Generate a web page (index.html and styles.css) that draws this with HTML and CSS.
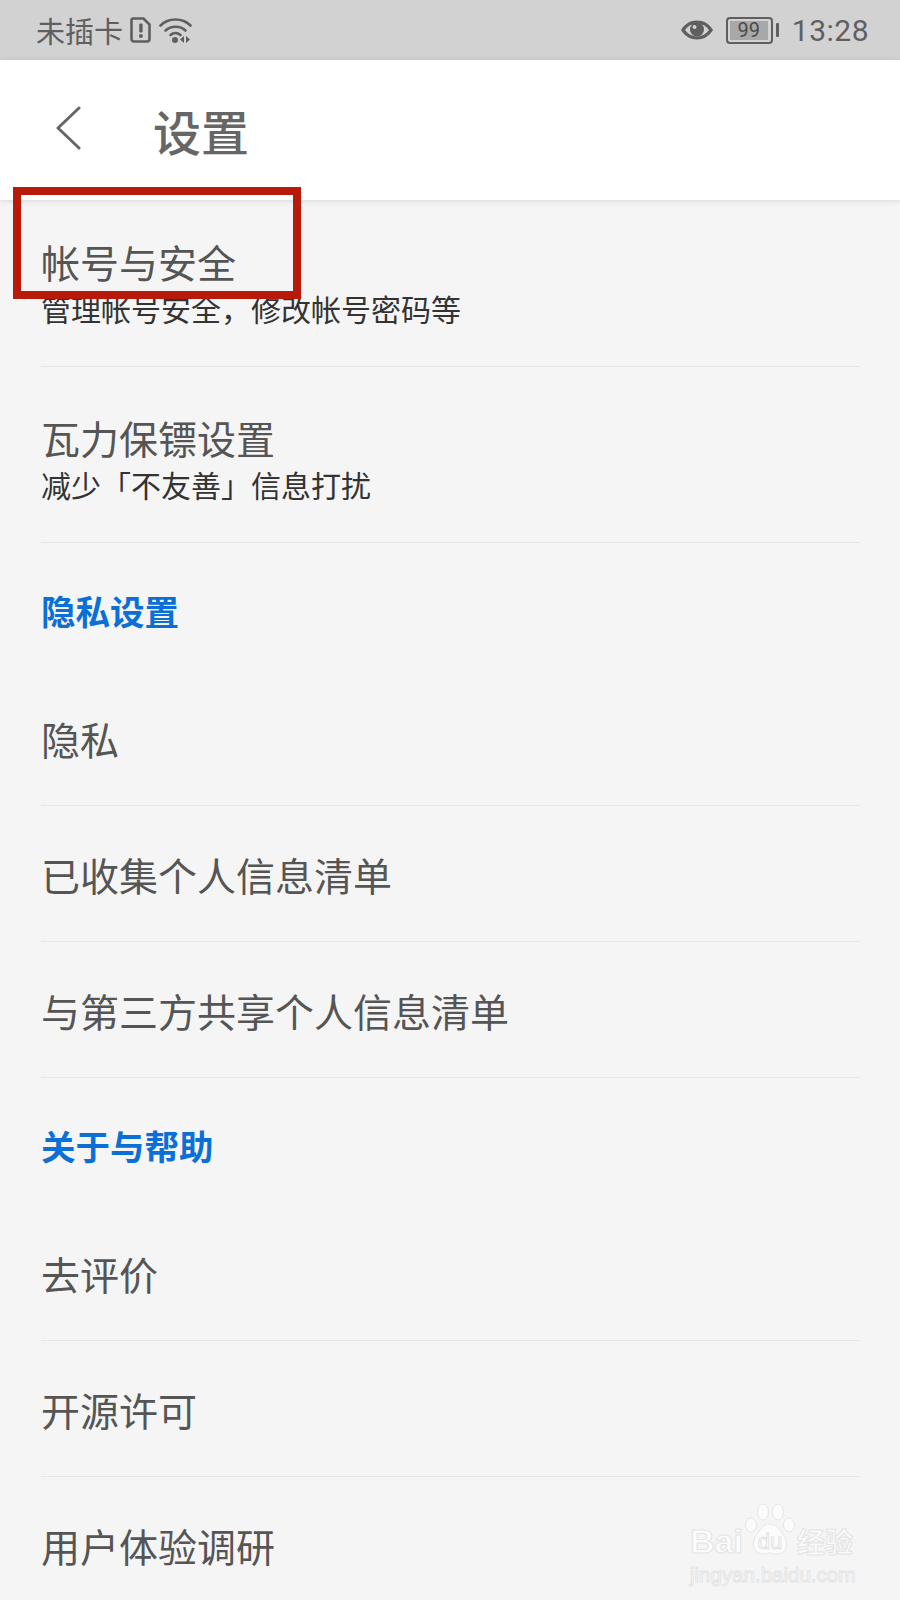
FILE: index.html
```html
<!DOCTYPE html>
<html lang="zh-CN">
<head>
  <meta charset="UTF-8">
  <meta name="viewport" content="width=device-width, initial-scale=1.0">
  <title>设置</title>
  <link rel="stylesheet" href="styles.css">
</head>
<body>
  <div class="page">
    <div class="status-bar">
      <div class="status-left">
        <span class="carrier">未插卡</span>
        <svg class="sim-icon" width="22" height="28" viewBox="0 0 22 28">
          <path d="M3 2.5h10.5l6 6V23a2.5 2.5 0 0 1-2.5 2.5H4A2.5 2.5 0 0 1 1.500 23V4A1.500 1.500 0 0 1 3 2.500z" fill="none" stroke="#5f5f5f" stroke-width="2.600"/>
          <rect x="9.200" y="7.500" width="3.400" height="9" rx="1" fill="#5f5f5f"/>
          <circle cx="10.900" cy="20" r="2" fill="#5f5f5f"/>
        </svg>
        <svg class="wifi-icon" width="34" height="28" viewBox="0 0 34 28">
          <path d="M1.500 9.500C9.500 1.500 23.500 1.500 31.500 9.500" fill="none" stroke="#5f5f5f" stroke-width="2.600" stroke-linecap="round"/>
          <path d="M6.500 14.500C12 9.500 21 9.500 26.500 14.500" fill="none" stroke="#5f5f5f" stroke-width="2.600" stroke-linecap="round"/>
          <path d="M11.500 19C14.500 16.500 18.500 16.500 21.500 19" fill="none" stroke="#5f5f5f" stroke-width="2.600" stroke-linecap="round"/>
          <circle cx="16" cy="24" r="3" fill="#5f5f5f"/>
          <path d="M25 20v7l-4-3.500zM27 20v7l4-3.500z" fill="#5f5f5f"/>
        </svg>
      </div>
      <div class="status-right">
        <svg class="eye-icon" width="34" height="22" viewBox="0 0 34 22">
          <path d="M1 11C5 4.500 10.500 1.500 17 1.500S29 4.500 33 11c-4 6.500-9.500 9.500-16 9.500S5 17.500 1 11z" fill="#5f5f5f"/>
          <path d="M5 11c3-4.200 7-6.500 12-6.500S26 6.800 29 11c-3 4.200-7 6.500-12 6.500S8 15.200 5 11z" fill="#d2d2d2"/>
          <circle cx="17" cy="10.500" r="7" fill="#5f5f5f"/>
          <circle cx="14.500" cy="8" r="2" fill="#d2d2d2"/>
        </svg>
        <div class="battery">
          <div class="battery-body"><span class="battery-level">99</span></div>
          <div class="battery-tip"></div>
        </div>
        <span class="clock">13:28</span>
      </div>
    </div>

    <header class="top-bar">
      <svg class="back-icon" width="26" height="44" viewBox="0 0 26 44">
        <path d="M24 2L3 22l21 20" fill="none" stroke="#666" stroke-width="3" stroke-linecap="round" stroke-linejoin="round"/>
      </svg>
      <h1 class="page-title">设置</h1>
    </header>

    <div class="settings">
      <div class="row row-two row-first">
        <div class="row-title">帐号与安全</div>
        <div class="row-sub">管理帐号安全，修改帐号密码等</div>
      </div>
      <div class="row row-two">
        <div class="row-title">瓦力保镖设置</div>
        <div class="row-sub">减少「不友善」信息打扰</div>
      </div>
      <div class="section-title">隐私设置</div>
      <div class="row"><div class="row-title">隐私</div></div>
      <div class="row"><div class="row-title">已收集个人信息清单</div></div>
      <div class="row"><div class="row-title">与第三方共享个人信息清单</div></div>
      <div class="section-title">关于与帮助</div>
      <div class="row"><div class="row-title">去评价</div></div>
      <div class="row"><div class="row-title">开源许可</div></div>
      <div class="row row-last"><div class="row-title">用户体验调研</div></div>
    </div>

    <div class="red-box"></div>

    <div class="watermark">
      <div class="wm-top">
        <span class="wm-brand">Bai</span>
        <div class="wm-paw">
          <svg width="50" height="56" viewBox="0 0 50 56">
            <g fill="#fbfbfb" stroke="#e6e6e6" stroke-width="1">
              <ellipse cx="6" cy="22" rx="5.500" ry="7"/>
              <ellipse cx="18" cy="9" rx="5.500" ry="8"/>
              <ellipse cx="33" cy="9" rx="5.500" ry="8"/>
              <ellipse cx="44" cy="22" rx="5.500" ry="7"/>
              <path d="M25 21c7 0 10 6 14 12 5 7 3 18-7 18-3 0-5-1-7-1s-4 1-7 1c-10 0-12-11-7-18 4-6 7-12 14-12z"/>
            </g>
          </svg>
          <span class="wm-du">du</span>
        </div>
        <span class="wm-cn">经验</span>
      </div>
      <div class="wm-url">jingyan.baidu.com</div>
    </div>
  </div>
</body>
</html>
```

FILE: styles.css
```css
* {
  box-sizing: border-box;
}
body {
  margin: 0;
  background: #f5f5f5;
  font-family: "Noto Sans CJK SC", "Noto Sans", sans-serif;
}
.page {
  position: relative;
  width: 900px;
  height: 1600px;
  overflow: hidden;
  background: #f5f5f5;
}

/* status bar */
.status-bar {
  height: 60px;
  background: #d2d2d2;
  display: flex;
  justify-content: space-between;
  align-items: center;
  padding: 0 31px 0 36px;
  color: #5f5f5f;
}
.status-left, .status-right {
  display: flex;
  align-items: center;
}
.carrier {
  font-size: 29px;
  line-height: 60px;
}
.sim-icon {
  margin-left: 7px;
}
.wifi-icon {
  margin-left: 7px;
}
.battery {
  display: flex;
  align-items: center;
  margin-left: 12px;
}
.battery-body {
  width: 47px;
  height: 27px;
  border: 2px solid #5f5f5f;
  border-radius: 4px;
  padding: 2px;
}
.battery-level {
  display: block;
  height: 19px;
  width: 38px;
  background: #a8a8a8;
  font-family: "Roboto", sans-serif;
  font-size: 20px;
  line-height: 19px;
  text-align: center;
  color: #4c4c4c;
}
.battery-tip {
  width: 3px;
  height: 14px;
  background: #5f5f5f;
  margin-left: 3px;
  border-radius: 1px;
}
.clock {
  margin-left: 13px;
  font-family: "Roboto", sans-serif;
  font-size: 30px;
  letter-spacing: 0.5px;
}

/* header */
.top-bar {
  height: 140px;
  background: #fff;
  display: flex;
  align-items: center;
  padding-left: 55px;
  box-shadow: 0 1px 6px rgba(0, 0, 0, 0.12);
  position: relative;
}
.back-icon {
  margin-top: -4px;
}
.page-title {
  margin: 0 0 0 72px;
  font-size: 48px;
  font-weight: 500;
  color: #666;
  line-height: 60px;
}

/* list */
.settings {
  padding: 0 40px 0 41px;
}
.row {
  height: 136px;
  border-bottom: 1px solid #e6e6e6;
  display: flex;
  flex-direction: column;
  justify-content: center;
}
.row-two {
  height: 176px;
  justify-content: flex-start;
  padding-top: 46px;
}
.row-first {
  height: 167px;
  padding-top: 37px;
}
.row-last {
  border-bottom: none;
}
.row-title {
  font-size: 39px;
  line-height: 48px;
  color: #555;
}
.row-sub {
  font-size: 30px;
  line-height: 46px;
  color: #333;
}
.section-title {
  height: 127px;
  padding-top: 43px;
  font-size: 34.500px;
  line-height: 48px;
  font-weight: 700;
  color: #0b70d5;
}

/* annotation over the screenshot */
.red-box {
  position: absolute;
  left: 13px;
  top: 187px;
  width: 288px;
  height: 112px;
  border: 8px solid #b81a0a;
}

/* watermark */
.watermark {
  position: absolute;
  left: 690px;
  top: 1503px;
  width: 170px;
  color: #fbfbfb;
  -webkit-text-stroke: 1px #e4e4e4;
}
.wm-top {
  display: flex;
  align-items: flex-end;
  height: 56px;
}
.wm-brand {
  font-family: "Liberation Sans", sans-serif;
  font-weight: 700;
  font-size: 34px;
  line-height: 34px;
  width: 55px;
  margin-bottom: 1px;
}
.wm-paw {
  position: relative;
  width: 50px;
  height: 56px;
}
.wm-du {
  position: absolute;
  left: 0;
  right: 0;
  bottom: 5px;
  text-align: center;
  font-family: "Liberation Sans", sans-serif;
  font-size: 22px;
  line-height: 24px;
}
.wm-cn {
  font-size: 28px;
  line-height: 36px;
  font-weight: 700;
  margin-left: 2px;
  white-space: nowrap;
}
.wm-url {
  font-family: "Liberation Sans", sans-serif;
  font-size: 20.500px;
  line-height: 26px;
  margin-top: 3px;
  white-space: nowrap;
}
```
